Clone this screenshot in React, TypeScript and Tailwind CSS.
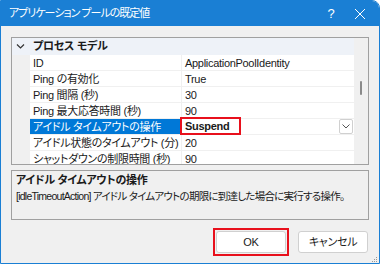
const rows = [
  { name: 'ID', value: 'ApplicationPoolIdentity' },
  { name: 'Ping の有効化', value: 'True' },
  { name: 'Ping 間隔 (秒)', value: '30' },
  { name: 'Ping 最大応答時間 (秒)', value: '90' },
  { name: 'アイドル タイムアウトの操作', value: 'Suspend', selected: true },
  { name: 'アイドル状態のタイムアウト (分)', value: '20' },
  { name: 'シャットダウンの制限時間 (秒)', value: '90' },
];

const font = { fontFamily: '"Liberation Sans", "Noto Sans CJK JP", sans-serif', fontFeatureSettings: '"palt"' };

export default function App() {
  return (
    <div
      className="w-[380px] h-[264px] flex flex-col bg-[#f0f0f0] border border-[#1a7fd4] rounded-tr-[8px] overflow-hidden text-[11px] tracking-[-0.3px] text-[#1a1a1a]"
      style={font}
    >
      <div className="h-[25px] shrink-0 bg-[#1a7fd4] flex items-center text-white pl-[8px]">
        <span className="flex-1 leading-none text-[11px] tracking-[-1px]">アプリケーション プールの既定値</span>
        <span className="w-[40px] text-center text-[13px] leading-none">?</span>
        <svg width="12" height="12" viewBox="0 0 12 12" className="mr-[13px] ml-[3px]">
          <path d="M1 1 L11 11 M11 1 L1 11" stroke="white" strokeWidth="1" />
        </svg>
      </div>

      <div className="flex-1 flex flex-col px-[10px] pt-[11px]">
        <div className="h-[128px] border border-[#a0a0a0] bg-white flex overflow-hidden">
          <div className="flex-1 flex flex-col">
            <div className="h-[17px] shrink-0 flex items-center bg-[#eef2f8] font-bold">
              <svg width="18" height="17" viewBox="0 0 18 17">
                <path d="M5 6.5 L8.5 10 L12 6.5" stroke="#333" strokeWidth="1.2" fill="none" />
              </svg>
              <span className="pl-[3px] leading-none">プロセス モデル</span>
            </div>
            {rows.map((r) => (
              <div key={r.name} className="h-[16px] shrink-0 flex">
                <div className="w-[18px] shrink-0 bg-[#f0f0f0]" />
                <div
                  className={`w-[151px] shrink-0 pl-[3px] leading-[16px] whitespace-nowrap overflow-hidden border-b border-[#f0f0f0] ${
                    r.selected ? 'bg-[#0078d7] text-white border-[#0078d7]' : ''
                  }`}
                >
                  {r.name}
                </div>
                <div className="w-px shrink-0 bg-[#f0f0f0]" />
                <div className="flex-1 flex items-center border-b border-[#f0f0f0]">
                  {r.selected ? (
                    <>
                      <div className="h-[18px] -mt-[2px] ml-[-2px] w-[61px] border-2 border-[#e8101c] font-bold leading-[14px] pl-[3px]">
                        {r.value}
                      </div>
                      <div className="ml-auto mr-[1px] w-[14px] h-[15px] border border-[#d0d0d0] rounded-[2px] bg-white flex items-center justify-center">
                        <svg width="8" height="5" viewBox="0 0 8 5">
                          <path d="M0.5 0.5 L4 4 L7.5 0.5" stroke="#555" strokeWidth="1" fill="none" />
                        </svg>
                      </div>
                    </>
                  ) : (
                    <span className="pl-[3px] leading-[16px] whitespace-nowrap">{r.value}</span>
                  )}
                </div>
              </div>
            ))}
          </div>
          <div className="w-[14px] shrink-0 bg-[#f0f0f0] flex justify-center pt-[43px]">
            <div className="w-[2px] h-[14px] bg-[#8a8a8a] rounded-full" />
          </div>
        </div>

        <div className="mt-[5px] h-[50px] border border-[#a0a0a0] px-[4px] pt-[1px]">
          <div className="font-bold leading-[16px]">アイドル タイムアウトの操作</div>
          <div className="leading-[16px] whitespace-nowrap text-[10.5px] tracking-[-0.75px]">
            [idleTimeoutAction] アイドル タイムアウトの期限に到達した場合に実行する操作。
          </div>
        </div>

        <div className="flex justify-end mt-[8px] gap-[9px]">
          <div className="border-2 border-[#e8101c] p-px">
            <button className="w-[70px] h-[22px] bg-white border border-[#d0d0d0] rounded-[3px] leading-none">
              OK
            </button>
          </div>
          <div className="pt-[3px] pr-[1px]">
            <button className="w-[70px] h-[22px] bg-white border border-[#d0d0d0] rounded-[3px] leading-none">
              キャンセル
            </button>
          </div>
        </div>
        <div className="flex justify-end -mr-[9px] mt-auto mb-[1px]">
          <svg width="7" height="7" viewBox="0 0 7 7">
            <rect x="5" y="1" width="1" height="1" fill="#999" />
            <rect x="3" y="3" width="1" height="1" fill="#999" />
            <rect x="5" y="3" width="1" height="1" fill="#999" />
            <rect x="1" y="5" width="1" height="1" fill="#999" />
            <rect x="3" y="5" width="1" height="1" fill="#999" />
            <rect x="5" y="5" width="1" height="1" fill="#999" />
          </svg>
        </div>
      </div>
    </div>
  );
}
